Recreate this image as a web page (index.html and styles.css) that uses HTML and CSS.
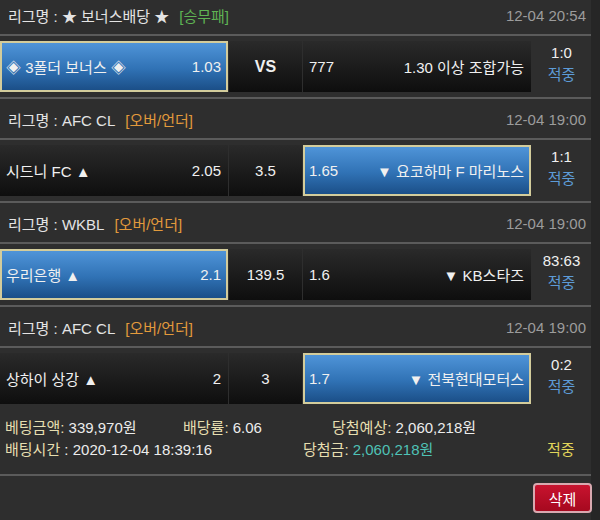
FILE: index.html
```html
<!DOCTYPE html>
<html lang="ko">
<head>
<meta charset="utf-8">
<link rel="stylesheet" href="styles.css">
</head>
<body>
<div class="page">
  <div class="league first">
    <span class="lname">리그명 : ★ 보너스배당 ★</span><span class="tag green">[승무패]</span>
    <span class="date">12-04 20:54</span>
  </div>
  <div class="bet">
    <div class="cell sel"><span>◈ 3폴더 보너스 ◈</span><span>1.03</span></div>
    <div class="cell mid bold">VS</div>
    <div class="cell"><span>777</span><span>1.30 이상 조합가능</span></div>
    <div class="score"><span>1:0</span><span class="hit">적중</span></div>
  </div>

  <div class="league">
    <span class="lname">리그명 : AFC CL</span><span class="tag orange">[오버/언더]</span>
    <span class="date">12-04 19:00</span>
  </div>
  <div class="bet">
    <div class="cell"><span>시드니 FC ▲</span><span>2.05</span></div>
    <div class="cell mid">3.5</div>
    <div class="cell sel"><span>1.65</span><span>▼ 요코하마 F 마리노스</span></div>
    <div class="score"><span>1:1</span><span class="hit">적중</span></div>
  </div>

  <div class="league">
    <span class="lname">리그명 : WKBL</span><span class="tag orange">[오버/언더]</span>
    <span class="date">12-04 19:00</span>
  </div>
  <div class="bet">
    <div class="cell sel"><span>우리은행 ▲</span><span>2.1</span></div>
    <div class="cell mid">139.5</div>
    <div class="cell"><span>1.6</span><span>▼ KB스타즈</span></div>
    <div class="score"><span>83:63</span><span class="hit">적중</span></div>
  </div>

  <div class="league">
    <span class="lname">리그명 : AFC CL</span><span class="tag orange">[오버/언더]</span>
    <span class="date">12-04 19:00</span>
  </div>
  <div class="bet last">
    <div class="cell"><span>상하이 상강 ▲</span><span>2</span></div>
    <div class="cell mid">3</div>
    <div class="cell sel"><span>1.7</span><span>▼ 전북현대모터스</span></div>
    <div class="score"><span>0:2</span><span class="hit">적중</span></div>
  </div>

  <div class="summary">
    <div class="line">
      <span class="c1"><span class="lbl">베팅금액:</span> 339,970원</span>
      <span class="c2"><span class="lbl">배당률:</span> 6.06</span>
      <span class="c3"><span class="lbl">당첨예상:</span> 2,060,218원</span>
    </div>
    <div class="line">
      <span class="d1"><span class="lbl">배팅시간</span> : 2020-12-04 18:39:16</span>
      <span class="d2"><span class="lbl">당첨금:</span> <span class="cyan">2,060,218원</span></span>
      <span class="d3">적중</span>
    </div>
  </div>

  <div class="footer">
    <button class="del">삭제</button>
  </div>
</div>
</body>
</html>
```
FILE: styles.css
```css
* { box-sizing: border-box; }
html, body { margin: 0; padding: 0; }
body {
  background: #262626;
  font-family: "Liberation Sans", "Noto Sans CJK KR", sans-serif;
  font-size: 15px;
  color: #ececec;
  width: 600px;
  height: 520px;
  overflow: hidden;
}
.page {
  width: 591px;
  height: 520px;
  background: #2e2e2e;
}
.league {
  height: 41px;
  display: flex;
  align-items: center;
  padding: 2px 5px 0 8px;
  border-bottom: 2px solid #5b5b5b;
  color: #e4e4e4;
}
.league.first {
  height: 36px;
  padding-top: 0;
  padding-bottom: 3px;
}
.tag { margin-left: 10px; }
.green { color: #5fb454; }
.orange { color: #e29a3c; }
.date { margin-left: auto; color: #9c9c9c; }

.bet {
  height: 63px;
  padding: 5px 0 5px;
  display: grid;
  grid-template-columns: 228px 73px 228px 1fr;
  column-gap: 1px;
  border-bottom: 2px solid #5b5b5b;
}
.bet.last {
  height: 61px;
  border-bottom: none;
}
.cell {
  display: flex;
  align-items: center;
  justify-content: space-between;
  padding: 0 7px 0 6px;
  background: linear-gradient(#2a2a2a, #0e0e0e);
  color: #f0f0f0;
  white-space: nowrap;
}
.cell.sel {
  background: linear-gradient(#4f94d8, #3072b5 55%, #1b4f88);
  border: 2px solid #d3cc9b;
  padding: 0 5px 0 4px;
}
.cell.mid { justify-content: center; padding: 0; }
.bold { font-weight: bold; font-size: 16px; }
.score {
  display: flex;
  flex-direction: column;
  align-items: center;
  justify-content: center;
  line-height: 22px;
  padding-bottom: 5px;
  color: #f0f0f0;
}
.hit { color: #5d9bd6; }

.summary {
  padding: 8px 0 13px 5px;
  border-bottom: 2px solid #5b5b5b;
}
.line {
  display: flex;
  height: 22px;
  line-height: 22px;
  white-space: nowrap;
}
.lbl { color: #e6deb0; }
.c1 { width: 178px; }
.c2 { width: 149px; }
.d1 { width: 298px; }
.d2 { width: 244px; }
.d3 { color: #e0d55a; }
.cyan { color: #4fc2b6; }

.footer {
  display: flex;
  justify-content: flex-end;
  padding-top: 7px;
}
.del {
  width: 59px;
  height: 30px;
  margin-right: -1px;
  border: 2px solid #d9a9b0;
  border-radius: 4px;
  background: linear-gradient(#c8132f, #a6091f);
  color: #fff;
  font-family: "Liberation Sans", "Noto Sans CJK KR", sans-serif;
  font-size: 15px;
  padding: 0;
}
```
